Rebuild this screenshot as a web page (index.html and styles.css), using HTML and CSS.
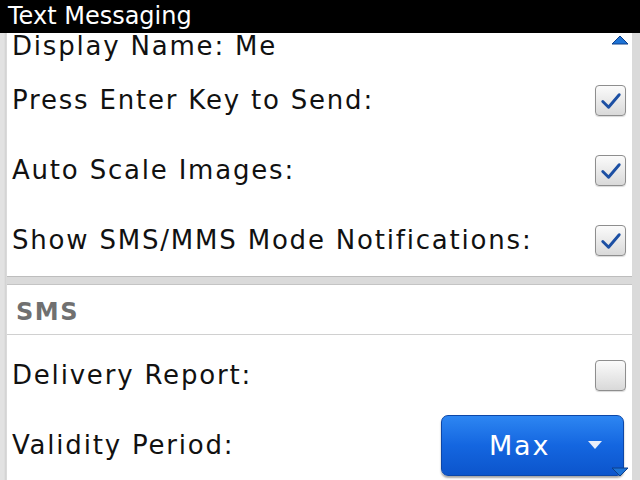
FILE: index.html
```html
<!DOCTYPE html>
<html>

<head>
    <title>Text Messaging</title>
    <meta charset="UTF-8">
    <link rel="stylesheet" href="styles.css">
</head>

<body>
    <div class="titulo">Text Messaging</div>
    <div class="tela">
        <div class="secao">
            <div class="linha primeira">Display Name: Me</div>
            <div class="linha">
                <span>Press Enter Key to Send:</span>
                <span class="caixa marcada"><svg viewBox="0 0 30 30"><path d="M7 16 L13 22 L24 9" /></svg></span>
            </div>
            <div class="linha">
                <span>Auto Scale Images:</span>
                <span class="caixa marcada"><svg viewBox="0 0 30 30"><path d="M7 16 L13 22 L24 9" /></svg></span>
            </div>
            <div class="linha">
                <span>Show SMS/MMS Mode Notifications:</span>
                <span class="caixa marcada"><svg viewBox="0 0 30 30"><path d="M7 16 L13 22 L24 9" /></svg></span>
            </div>
        </div>
        <div class="secao segunda">
            <div class="cabecalho">SMS</div>
            <div class="linha entrega">
                <span>Delivery Report:</span>
                <span class="caixa"></span>
            </div>
            <div class="linha">
                <span>Validity Period:</span>
                <span class="botao">Max<svg class="seta" viewBox="0 0 16 10"><path d="M1 1 L15 1 L8 9 Z" /></svg></span>
            </div>
        </div>
    </div>
    <svg class="rolar cima" viewBox="0 0 18 10"><path d="M9 1 L17 9 L1 9 Z" /></svg>
    <svg class="rolar baixo" viewBox="0 0 18 10"><path d="M1 1 L17 1 L9 9 Z" /></svg>
</body>

</html>
```

FILE: styles.css
```css
* {
    margin: 0;
    padding: 0;
    box-sizing: border-box;
}

body {
    width: 640px;
    height: 480px;
    overflow: hidden;
    position: relative;
    font-family: "DejaVu Sans", sans-serif;
    background: #dadada;
}

.titulo {
    height: 33px;
    background: black;
    color: white;
    font-size: 24px;
    line-height: 33px;
    padding-left: 8px;
}

.tela {
    padding-left: 7px;
    padding-right: 8px;
    display: flex;
    flex-direction: column;
    gap: 7px;
    background: linear-gradient(to right, #e2e2e2 0, #e2e2e2 4px, #cfcfcf 6px, #dadada 6px);
}

.secao {
    background: white;
    border-bottom: 1px solid #bdbdbd;
    height: 244px;
}

.segunda {
    border-top: 1px solid #c4c4c4;
    height: 200px;
}

.linha {
    height: 70px;
    display: flex;
    align-items: center;
    justify-content: space-between;
    padding-left: 5px;
    padding-right: 6px;
    font-size: 26px;
    letter-spacing: 1.8px;
    color: #111;
}

.primeira {
    height: 32px;
    padding-bottom: 6px;
}

.entrega {
    height: 75px;
    padding-top: 5px;
}

.cabecalho {
    height: 50px;
    border-bottom: 1px solid #d0d0d0;
    display: flex;
    align-items: center;
    padding-left: 9px;
    padding-top: 4px;
    font-size: 24px;
    letter-spacing: 1.5px;
    font-weight: bold;
    color: #707070;
}

.caixa {
    width: 31px;
    height: 31px;
    border: 1px solid #8e8e8e;
    border-radius: 4px;
    background: linear-gradient(#fbfbfb, #d9d9d9);
    box-shadow: 0 1px 1px rgba(0, 0, 0, 0.15);
    display: flex;
}

.caixa svg {
    width: 100%;
    height: 100%;
}

.caixa path {
    fill: none;
    stroke: #1c4fa3;
    stroke-width: 3;
    stroke-linecap: round;
    stroke-linejoin: round;
}

.botao {
    width: 183px;
    height: 61px;
    margin-top: 0;
    margin-right: 2px;
    border-radius: 7px;
    border: 1px solid #0c47a8;
    background: linear-gradient(#2d86f2, #1466e0 50%, #0c55cc);
    box-shadow: 0 2px 2px rgba(0, 0, 0, 0.35);
    color: white;
    font-size: 27px;
    display: flex;
    align-items: center;
    padding-left: 47px;
    position: relative;
}

.seta {
    position: absolute;
    right: 20px;
    top: 24px;
    width: 16px;
    height: 10px;
}

.seta path {
    fill: #e8eefa;
}

.rolar {
    position: absolute;
    width: 18px;
    height: 10px;
    right: 11px;
}

.rolar path {
    fill: #1d73d6;
    stroke: #0d3f8a;
    stroke-width: 1;
}

.cima {
    top: 35px;
}

.baixo {
    top: 467px;
}
```
